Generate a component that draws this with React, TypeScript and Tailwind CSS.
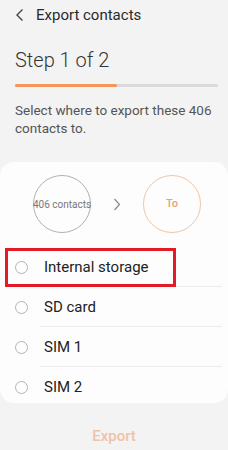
import React from "react";

const items = ["Internal storage", "SD card", "SIM 1", "SIM 2"];

export default function App() {
  return (
    <div className="w-[228px] h-[450px] bg-[#f3f3f3] flex flex-col overflow-hidden font-[Roboto,sans-serif]">
      {/* Header */}
      <div className="h-[30px] flex items-center pl-[15px]">
        <svg width="10" height="14" viewBox="0 0 10 14" className="mr-[11px]">
          <path d="M7.5 1.5 L2 7 L7.5 12.5" fill="none" stroke="#444" strokeWidth="1.4" />
        </svg>
        <span className="text-[15px] text-[#2a2a2a] leading-none">Export contacts</span>
      </div>

      {/* Step */}
      <div className="pl-[15px] pt-[18px] text-[20px] font-light text-[#333] leading-[24px]">
        Step 1 of 2
      </div>

      {/* Progress */}
      <div className="ml-[15px] mr-[10px] mt-[12px] h-[3px] rounded-full bg-[#dadada] flex">
        <div className="w-[102px] h-full rounded-full bg-[#f5955a]" />
      </div>

      {/* Description */}
      <div className="px-[15px] pt-[14px] text-[13.5px] leading-[18px] text-[#555]">
        Select where to export these 406 contacts to.
      </div>

      {/* Card */}
      <div className="mt-[25px] h-[241px] shrink-0 bg-[#fdfdfd] rounded-[14px] flex flex-col overflow-hidden">
        <div className="flex items-center pt-[13px] pl-[33px]">
          <div className="w-[58px] h-[58px] rounded-full border border-[#b0b0b0] flex items-center justify-center">
            <span className="text-[10px] text-[#777] whitespace-nowrap">406 contacts</span>
          </div>
          <div className="w-[52px] flex justify-center">
            <svg width="8" height="13" viewBox="0 0 8 13">
              <path d="M1.5 1 L6.5 6.5 L1.5 12" fill="none" stroke="#888" strokeWidth="1.2" />
            </svg>
          </div>
          <div className="w-[58px] h-[58px] rounded-full border border-[#f0c6a8] flex items-center justify-center">
            <span className="text-[11px] text-[#e9a375] font-medium">To</span>
          </div>
        </div>

        <div className="mt-[14px] flex flex-col">
          {items.map((label, i) => (
            <div key={label} className="relative h-[40px] shrink-0 flex items-center">
              <div className="ml-[15px] w-[13px] h-[13px] rounded-full border-[1.5px] border-[#b3b3b3]" />
              <span className="ml-[16px] text-[15px] text-[#222]">{label}</span>
              {i < items.length - 1 && (
                <div className="absolute left-[40px] right-[6px] bottom-0 h-px bg-[#ececec]" />
              )}
              {i === 0 && (
                <div className="absolute left-[5px] top-[1px] w-[171px] h-[39px] border-[3px] border-[#e21b25]" />
              )}
            </div>
          ))}
        </div>
      </div>

      {/* Export */}
      <div className="flex-1 flex items-center justify-center pt-[19px]">
        <span className="text-[15px] font-medium text-[#efc3a5]">Export</span>
      </div>
    </div>
  );
}
